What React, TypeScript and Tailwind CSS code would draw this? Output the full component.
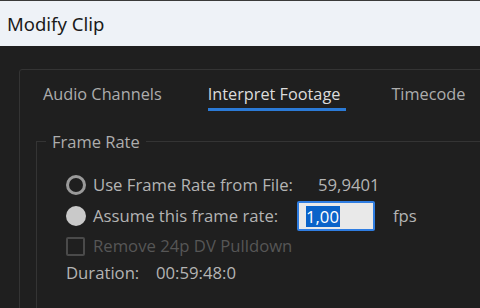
import React from 'react';

const font = { fontFamily: '"Open Sans", "Noto Sans", sans-serif' };

export default function App() {
  return (
    <div className="w-[480px] h-[308px] overflow-hidden bg-[#1f1f1f] flex flex-col" style={font}>
      {/* Title bar */}
      <div className="h-[46px] shrink-0 bg-[#eef2f7] border-t border-[#3a3a3a] flex items-center pl-[7px]">
        <span className="text-[18.5px] text-[#1a1a1a]" style={{ fontFamily: '"Noto Sans", "Open Sans", sans-serif' }}>Modify Clip</span>
      </div>

      {/* Dialog body */}
      <div className="flex-1 pt-[23px] pl-[19px]">
        <div className="w-[500px] h-[300px] border border-[#343434] rounded-[3px] bg-[#1f1f1f]">
          {/* Tabs */}
          <div className="flex items-end h-[41px] pl-[23px] text-[16.3px]">
            <div className="text-[#adadad] pb-[5px]">Audio Channels</div>
            <div className="ml-[46px] text-[#dcdcdc] pb-[2px] pr-[6px] border-b-[3px] border-[#2b7ad6]">Interpret Footage</div>
            <div className="ml-[45px] text-[#adadad] pb-[5px]">Timecode</div>
          </div>

          {/* Frame Rate group */}
          <div className="mt-[30px] ml-[16px] relative border-l border-t border-[#343434] h-[300px]">
            <span className="absolute -top-[11px] left-[9px] px-[6px] bg-[#1f1f1f] text-[16.5px] leading-[22px] text-[#adadad]">Frame Rate</span>

            <div className="pt-[28px] pl-[29px] flex flex-col text-[16.7px] text-[#b4b4b4]">
              <div className="flex items-center h-[30px]">
                <span className="w-[20px] h-[20px] rounded-full border-[3px] border-[#9a9a9a] shrink-0" />
                <span className="ml-[7px] w-[225px] shrink-0 whitespace-nowrap">Use Frame Rate from File:</span>
                <span>59,9401</span>
              </div>
              <div className="flex items-center h-[32px]">
                <span className="w-[20px] h-[20px] rounded-full bg-[#c9c9c9] shrink-0" />
                <span className="ml-[7px] w-[204px] shrink-0 whitespace-nowrap">Assume this frame rate:</span>
                <div className="w-[78px] h-[30px] rounded-[2px] border-2 border-[#2f7de1] bg-[#e9e9e9] flex items-center pl-[7px] shrink-0">
                  <span className="bg-[#0a63c9] text-white leading-[21px] pr-[1px]">1,00</span>
                </div>
                <span className="ml-[18px]">fps</span>
              </div>
              <div className="flex items-center h-[28px] text-[#565656]">
                <span className="w-[19px] h-[19px] rounded-[2px] border-2 border-[#4a4a4a] shrink-0" />
                <span className="ml-[8px]">Remove 24p DV Pulldown</span>
              </div>
              <div className="flex items-center h-[26px]">
                <span className="w-[90px] shrink-0">Duration:</span>
                <span>00:59:48:0</span>
              </div>
            </div>
          </div>
        </div>
      </div>
    </div>
  );
}
